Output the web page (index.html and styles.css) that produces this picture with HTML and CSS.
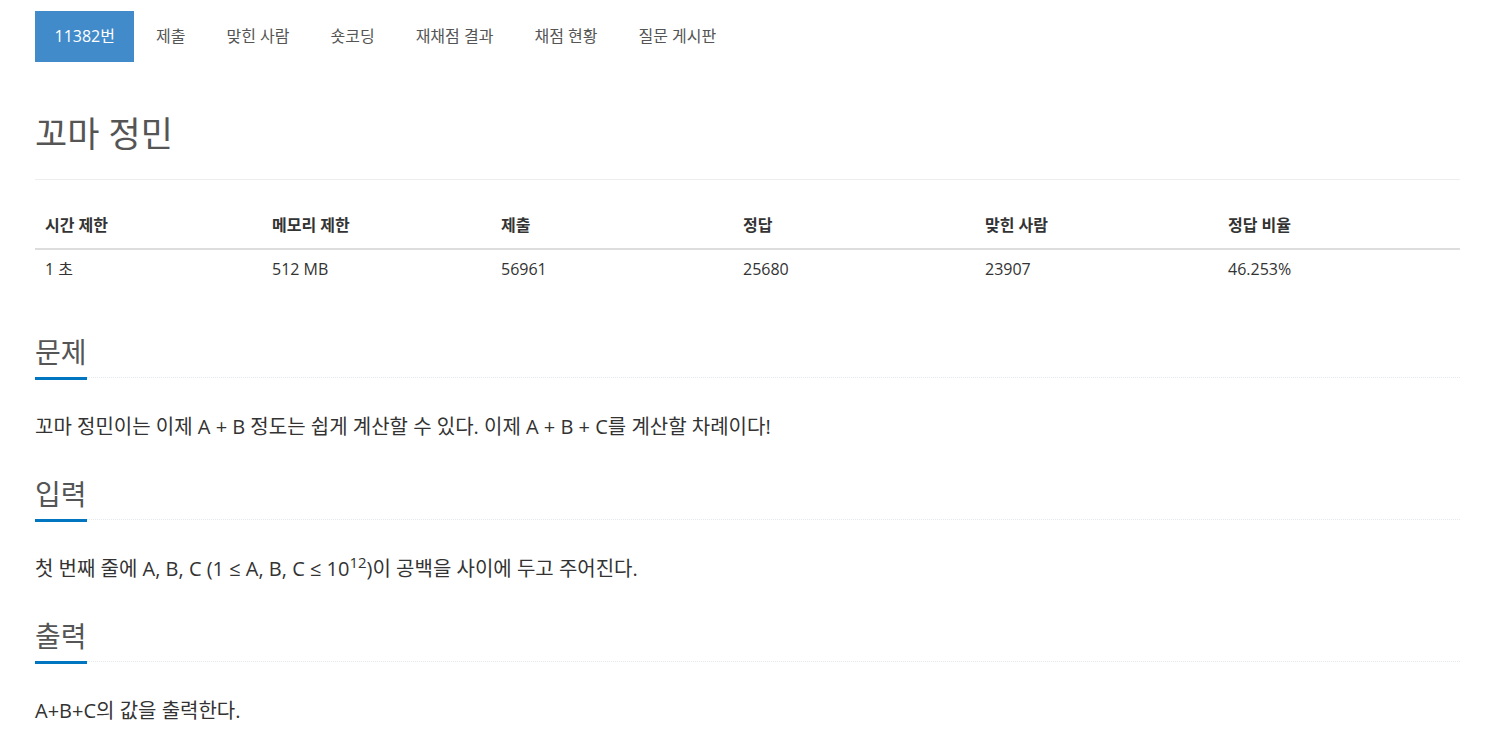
FILE: index.html
```html
<!DOCTYPE html>
<html lang="ko">
<head>
<meta charset="utf-8">
<title>꼬마 정민</title>
<link rel="stylesheet" href="styles.css">
</head>
<body>
<div class="container">
  <ul class="nav">
    <li class="active"><a>11382번</a></li>
    <li><a>제출</a></li>
    <li><a>맞힌 사람</a></li>
    <li><a>숏코딩</a></li>
    <li><a>재채점 결과</a></li>
    <li><a>채점 현황</a></li>
    <li><a>질문 게시판</a></li>
  </ul>

  <div class="page-header">
    <h1>꼬마 정민</h1>
  </div>

  <table class="info">
    <colgroup>
      <col class="c1"><col class="c2"><col class="c3"><col class="c4"><col class="c5"><col>
    </colgroup>
    <thead>
      <tr><th>시간 제한</th><th>메모리 제한</th><th>제출</th><th>정답</th><th>맞힌 사람</th><th>정답 비율</th></tr>
    </thead>
    <tbody>
      <tr><td>1 초</td><td>512 MB</td><td>56961</td><td>25680</td><td>23907</td><td>46.253%</td></tr>
    </tbody>
  </table>

  <section class="problem">
    <div class="headline"><h2>문제</h2></div>
    <p>꼬마 정민이는 이제 A + B 정도는 쉽게 계산할 수 있다. 이제 A + B + C를 계산할 차례이다!</p>
  </section>
  <section class="problem">
    <div class="headline"><h2>입력</h2></div>
    <p>첫 번째 줄에 A, B, C (1 ≤ A, B, C ≤ 10<sup>12</sup>)이 공백을 사이에 두고 주어진다.</p>
  </section>
  <section class="problem">
    <div class="headline"><h2>출력</h2></div>
    <p>A+B+C의 값을 출력한다.</p>
  </section>
</div>
</body>
</html>
```
FILE: styles.css
```css
* { box-sizing: border-box; }
html, body { margin: 0; padding: 0; background: #fff; }
body {
  font-family: "Open Sans", "Noto Sans CJK KR", sans-serif;
  font-size: 16px;
  line-height: 1.42857;
  color: #333;
}
.container {
  padding: 11px 40px 0 35px;
}
.nav {
  list-style: none;
  margin: 0;
  padding: 0;
  display: flex;
  gap: 2px;
}
.nav a {
  display: block;
  padding: 15px 19.5px 16px;
  line-height: 20px;
  color: #555;
  text-decoration: none;
}
.nav .active a {
  background: #428bca;
  color: #fff;
}
.page-header {
  margin: 52px 0 0;
  padding-bottom: 25px;
  border-bottom: 1px solid #eee;
}
.page-header h1 {
  margin: 0;
  font-size: 35px;
  font-weight: 400;
  line-height: 40px;
  color: #555;
}
.info {
  width: 100%;
  border-collapse: collapse;
  margin: 26px 0 47px;
}
.info col.c1 { width: 227px; }
.info col.c2 { width: 229px; }
.info col.c3 { width: 242px; }
.info col.c4 { width: 242px; }
.info col.c5 { width: 243px; }
.info th, .info td {
  text-align: left;
  padding: 8px 10px;
  line-height: 22px;
}
.info th {
  font-weight: 700;
  padding-bottom: 12px;
  border-bottom: 2px solid #ddd;
}
.problem { margin: 0; }
.headline {
  border-bottom: 1px dotted #e4e9f0;
  margin-bottom: 34px;
}
.headline h2 {
  display: inline-block;
  vertical-align: top;
  margin: 0 0 -3px;
  padding-bottom: 8px;
  font-size: 28px;
  font-weight: 400;
  line-height: 34px;
  color: #555;
  border-bottom: 3px solid #0076c0;
}
.problem p {
  margin: 0 0 35px;
  font-size: 20px;
  line-height: 30px;
  color: #333;
}
.problem p sup {
  font-size: 15px;
  line-height: 0;
  vertical-align: 8px;
}
```
